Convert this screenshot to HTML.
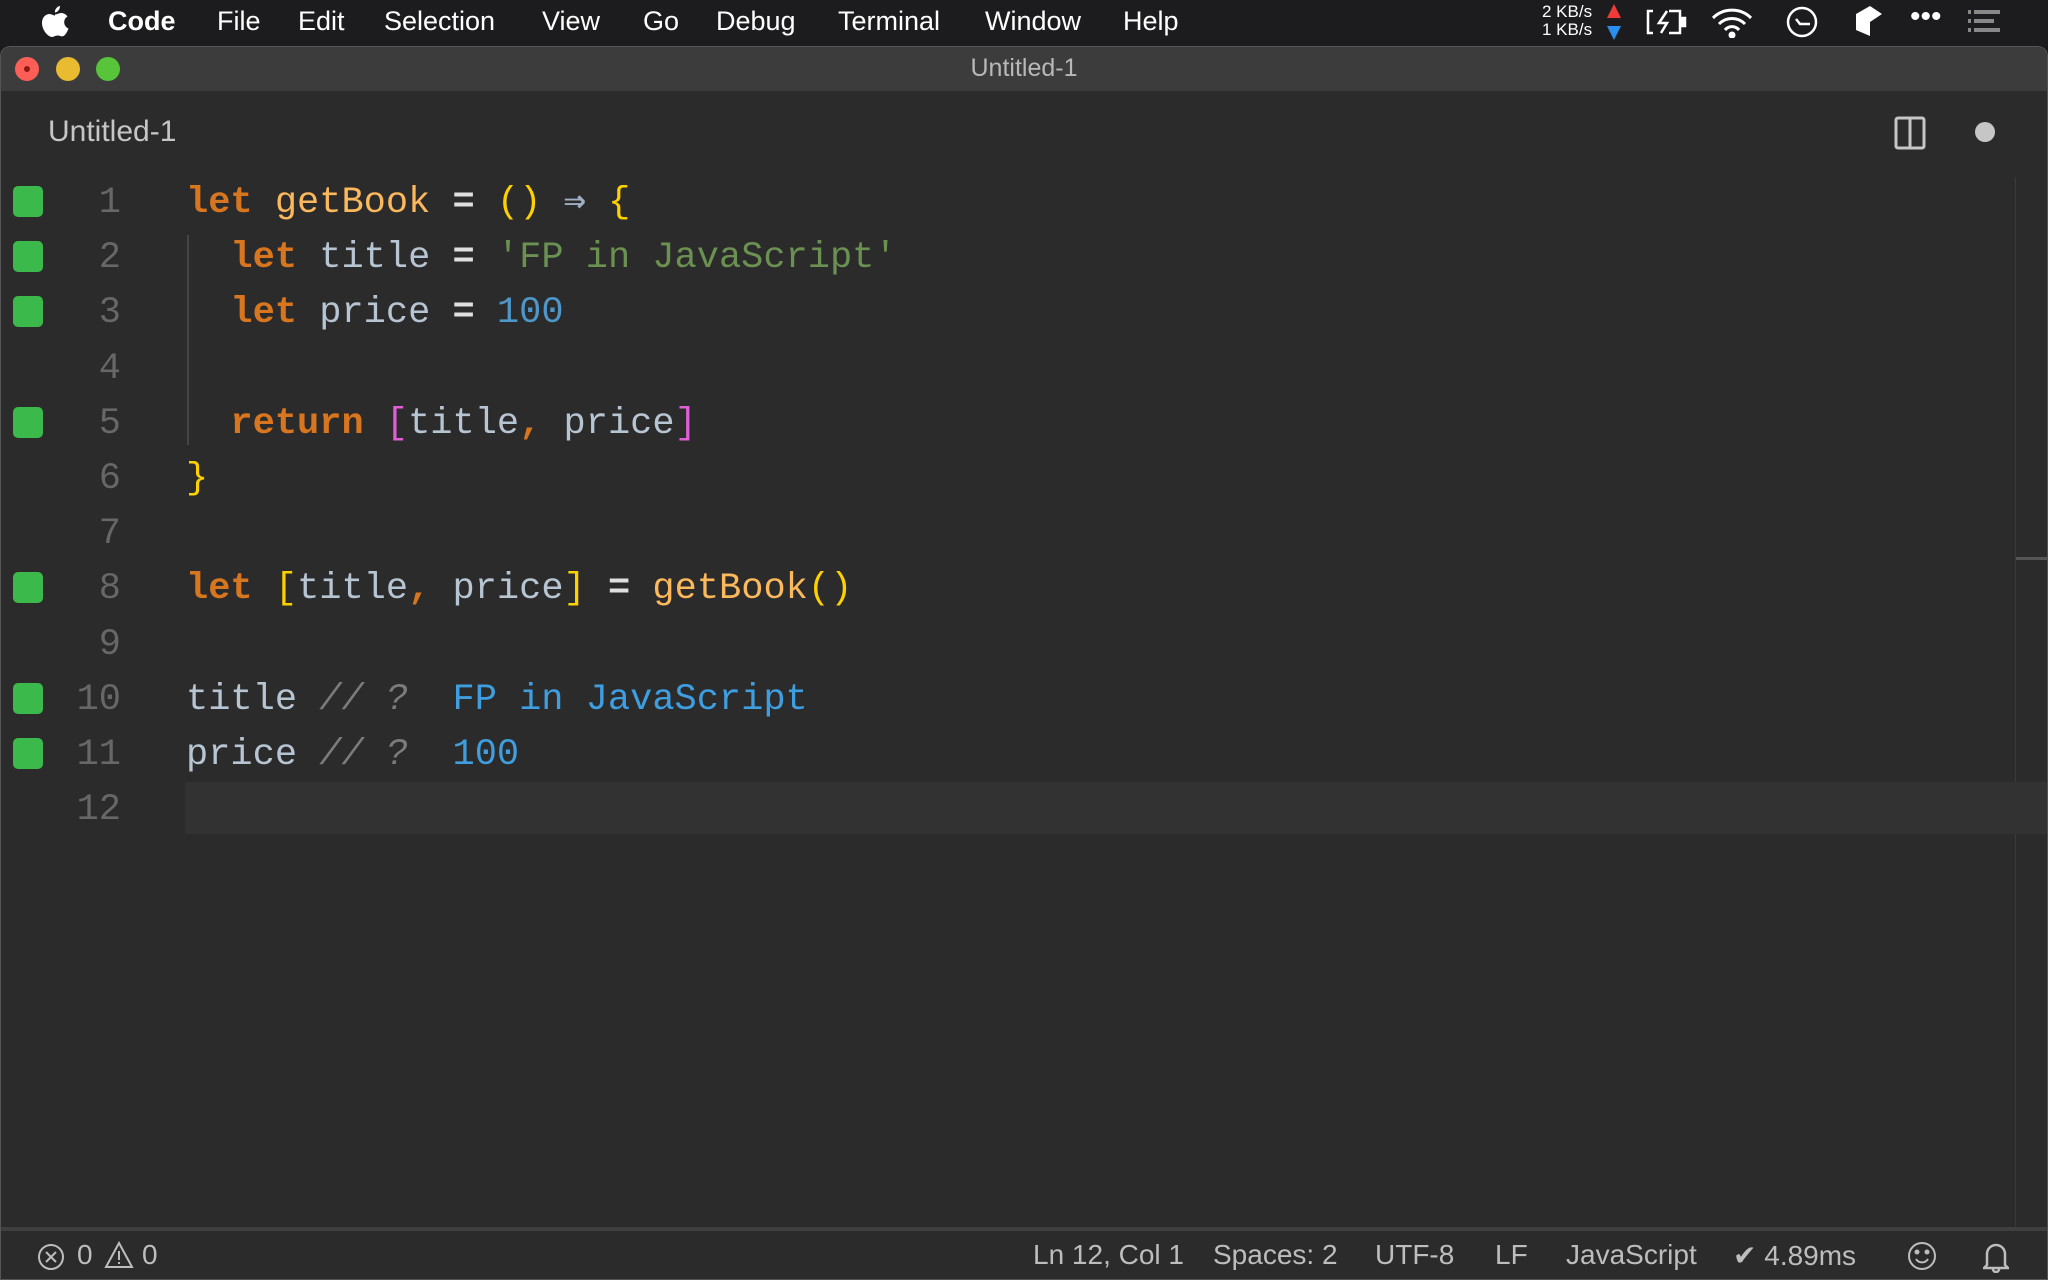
<!DOCTYPE html>
<html><head><meta charset="utf-8"><style>
*{margin:0;padding:0;box-sizing:border-box}
body{width:2048px;height:1280px;background:#1a1a1c;position:relative;overflow:hidden;font-family:"Liberation Sans",sans-serif}
.menubar{position:absolute;left:0;top:0;width:2048px;height:46px;background:#1c1c1f;color:#fff;font-size:27px}
.menubar span{position:absolute;top:6px}
.win{position:absolute;left:0;top:46px;width:2048px;height:1234px;background:#2b2b2b;border-radius:10px 10px 0 0;overflow:hidden;border:1px solid #555}
.title{position:absolute;left:0;top:0;width:100%;height:44px;background:#3c3c3c;color:#b8b8b8;font-size:25px;text-align:center;line-height:42px}
.tl{position:absolute;top:10px;width:24px;height:24px;border-radius:50%}
.tab{position:absolute;left:47px;top:68px;color:#c6c6c6;font-size:30px}
.code{position:absolute;left:0;top:129px;width:100%;font-family:"Liberation Mono",monospace;font-size:37px}
.ln{position:absolute;height:55.2px;line-height:55.2px;white-space:pre;width:100%}
.num{position:absolute;right:0;width:120px;left:0;text-align:right;color:#676767}
.sq{position:absolute;left:12px;top:10px;width:30px;height:31px;border-radius:5px;background:#3bb94a}
.tx{position:absolute;left:185px;color:#b7c5d3}
.k{color:#d8761f;font-weight:bold}.f{color:#fbb85c}.p{color:#fdd000}.o{color:#e0e0e0;font-weight:bold}
.s{color:#6b9152}.n{color:#4e97c9}.m{color:#e15fd6}.c{color:#7b7b7b;font-style:italic}.r{color:#3e9ee0}
.status{position:absolute;left:0;top:1180px;width:100%;height:54px;background:#2b2b2b;border-top:4px solid #3f3f3f;color:#bdbdbd;font-size:28px}
.status span{position:absolute;top:8px}
</style></head><body>
<div class="menubar">
<svg style="position:absolute;left:41px;top:6px" width="28" height="32" viewBox="0 0 28 32" fill="#fff"><path d="M19 0c0 3-2 6-5 6.5C13.5 3.5 16 0.5 19 0z"/><path d="M14 8.5c2 0 4-1.5 6-1.5 2.5 0 5 1.3 6.5 3.5-5 3-4 10 1 12-1 3-3 6.5-5 7.5-2 1-3.5-.5-6-.5s-3.5 1.5-5.5 1.5C7 31 1 24 1 17c0-6 4-9 7.5-9 2 0 3.5 1.5 5.5 1.5z"/></svg>
<span style="left:108px;font-weight:bold">Code</span>
<span style="left:217px">File</span><span style="left:298px">Edit</span><span style="left:384px">Selection</span>
<span style="left:542px">View</span><span style="left:643px">Go</span><span style="left:716px">Debug</span>
<span style="left:838px">Terminal</span><span style="left:985px">Window</span><span style="left:1123px">Help</span>
<span style="left:1542px;top:3px;font-size:17px;line-height:18px;text-align:right">2 KB/s<br>1 KB/s</span>
<svg style="position:absolute;left:1606px;top:4px" width="16" height="36"><polygon points="8,0 15,14 1,14" fill="#f03a3a"/><polygon points="1,22 15,22 8,36" fill="#2a8ef0"/></svg>
<svg style="position:absolute;left:1645px;top:8px" width="42" height="28" fill="none" stroke="#fff" stroke-width="2.5"><path d="M8 3H3v22h5M24 3h11v22H24"/><path d="M22 3l-8 12h8l-6 10" /><rect x="37" y="10" width="3" height="8" fill="#fff"/></svg>
<svg style="position:absolute;left:1710px;top:6px" width="44" height="32" fill="none" stroke="#fff" stroke-width="3"><path d="M3 12a27 27 0 0 1 38 0M9 18a18 18 0 0 1 26 0M15 24a9 9 0 0 1 14 0"/><circle cx="22" cy="29" r="2" fill="#fff"/></svg>
<svg style="position:absolute;left:1785px;top:5px" width="34" height="34" fill="none" stroke="#fff" stroke-width="2.5"><circle cx="17" cy="17" r="14"/><path d="M11 14l4 5h10"/></svg>
<svg style="position:absolute;left:1856px;top:6px" width="26" height="32"><path d="M0 8L14 0l12 8-12 8v14L0 24z" fill="#fff"/></svg>
<span style="left:1910px;top:0;font-size:30px">•••</span>
<svg style="position:absolute;left:1968px;top:10px" width="32" height="24" fill="#888"><rect x="0" y="0" width="3" height="4"/><rect x="6" y="0" width="26" height="4"/><rect x="0" y="9" width="3" height="4"/><rect x="6" y="9" width="20" height="4"/><rect x="0" y="18" width="3" height="4"/><rect x="6" y="18" width="26" height="4"/></svg>
</div>
<div class="win">
<div class="title">Untitled-1
<div class="tl" style="left:14px;background:#fd5f57"><div style="width:6px;height:6px;border-radius:50%;background:#8c1a14;margin:9px"></div></div>
<div class="tl" style="left:55px;background:#e9bb30"></div>
<div class="tl" style="left:95px;background:#57c43a"></div>
</div>
<div class="tab">Untitled-1</div>
<svg style="position:absolute;left:1893px;top:69px" width="32" height="34" fill="none" stroke="#c6c6c6" stroke-width="3"><rect x="2" y="2" width="28" height="30" rx="2"/><path d="M16 2v30"/></svg>
<div style="position:absolute;left:1974px;top:75px;width:20px;height:20px;border-radius:50%;background:#c6c6c6"></div>
<div style="position:absolute;left:2014px;top:130px;width:1px;height:1050px;background:#3a3a3a"></div>
<div style="position:absolute;left:2015px;top:510px;width:33px;height:3px;background:#555"></div>
<div style="position:absolute;left:186px;top:188px;width:2px;height:210px;background:#454545"></div>
<div style="position:absolute;left:184px;top:735px;width:1864px;height:52px;background:#323232"></div>
<div class="code">
<div class="ln" style="top:0"><div class="sq"></div><div class="num">1</div><div class="tx"><span class="k">let</span> <span class="f">getBook</span> <span class="o">=</span> <span class="p">()</span> <span style="color:#9fb0c4;font-weight:bold">⇒</span> <span class="p">{</span></div></div>
<div class="ln" style="top:55.2px"><div class="sq"></div><div class="num">2</div><div class="tx">  <span class="k">let</span> title <span class="o">=</span> <span class="s">'FP in JavaScript'</span></div></div>
<div class="ln" style="top:110.4px"><div class="sq"></div><div class="num">3</div><div class="tx">  <span class="k">let</span> price <span class="o">=</span> <span class="n">100</span></div></div>
<div class="ln" style="top:165.6px"><div class="num">4</div></div>
<div class="ln" style="top:220.8px"><div class="sq"></div><div class="num">5</div><div class="tx">  <span class="k">return</span> <span class="m">[</span>title<span class="k">,</span> price<span class="m">]</span></div></div>
<div class="ln" style="top:276px"><div class="num">6</div><div class="tx"><span class="p">}</span></div></div>
<div class="ln" style="top:331.2px"><div class="num">7</div></div>
<div class="ln" style="top:386.4px"><div class="sq"></div><div class="num">8</div><div class="tx"><span class="k">let</span> <span class="p">[</span>title<span class="k">,</span> price<span class="p">]</span> <span class="o">=</span> <span class="f">getBook</span><span class="p">()</span></div></div>
<div class="ln" style="top:441.6px"><div class="num">9</div></div>
<div class="ln" style="top:496.8px"><div class="sq"></div><div class="num">10</div><div class="tx">title <span class="c">// ?</span>  <span class="r">FP in JavaScript</span></div></div>
<div class="ln" style="top:552px"><div class="sq"></div><div class="num">11</div><div class="tx">price <span class="c">// ?</span>  <span class="r">100</span></div></div>
<div class="ln" style="top:607.2px"><div class="num">12</div></div>
</div>
<div class="status">
<svg style="position:absolute;left:36px;top:12px" width="28" height="28" fill="none" stroke="#bdbdbd" stroke-width="2"><circle cx="14" cy="14" r="12"/><path d="M9 9l10 10M19 9L9 19"/></svg>
<span style="left:76px">0</span>
<svg style="position:absolute;left:103px;top:10px" width="30" height="28" fill="none" stroke="#bdbdbd" stroke-width="2"><path d="M15 2L28 26H2z"/><path d="M15 10v9M15 21v2"/></svg>
<span style="left:141px">0</span>
<span style="left:1032px">Ln 12, Col 1</span><span style="left:1212px">Spaces: 2</span><span style="left:1374px">UTF-8</span>
<span style="left:1494px">LF</span><span style="left:1565px">JavaScript</span><span style="left:1732px">✔ 4.89ms</span>
<svg style="position:absolute;left:1906px;top:10px" width="30" height="30" fill="none" stroke="#bdbdbd" stroke-width="2"><circle cx="15" cy="15" r="13"/><circle cx="10" cy="11" r="1.5" fill="#bdbdbd"/><circle cx="20" cy="11" r="1.5" fill="#bdbdbd"/><path d="M9 18a7 7 0 0 0 12 0"/></svg>
<svg style="position:absolute;left:1982px;top:10px" width="26" height="32" fill="none" stroke="#bdbdbd" stroke-width="2.5"><path d="M4 24V13a9 9 0 0 1 18 0v11l3 3H1zM10 28a3 3 0 0 0 6 0"/></svg>
</div>
</div>
</body></html>
